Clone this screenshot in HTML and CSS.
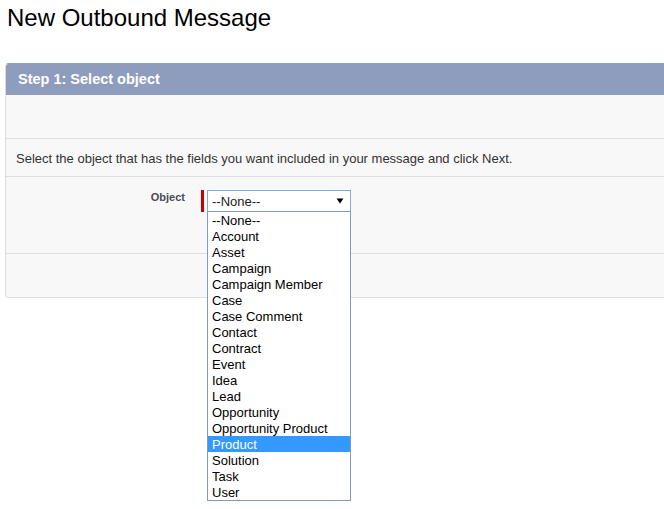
FILE: index.html
```html
<!DOCTYPE html>
<html>
    <head>
        <meta charset="utf-8">
        <title>New Outbound Message</title>
        <link rel="stylesheet" href="styles.css">
    </head>
    <body>
        <h1 class="page_title">New Outbound Message</h1>
        <div class="panel">
            <div class="panel_head">
                <h2>Step 1: Select object</h2>
            </div>
            <div class="panel_blank"></div>
            <div class="panel_desc">Select the object that has the fields you want included in your message and click Next.</div>
            <div class="panel_form">
                <div class="field_row">
                    <label class="field_label">Object</label>
                    <div class="req_bar"></div>
                    <div class="picklist">
                        <div class="pick_value">
                            <span>--None--</span>
                            <svg class="pick_arrow" width="8" height="6" viewBox="0 0 8 6"><polygon points="0.5,0.5 7.5,0.5 4,5.5" fill="#000"/></svg>
                        </div>
                        <ul class="pick_options">
                            <li>--None--</li>
                            <li>Account</li>
                            <li>Asset</li>
                            <li>Campaign</li>
                            <li>Campaign Member</li>
                            <li>Case</li>
                            <li>Case Comment</li>
                            <li>Contact</li>
                            <li>Contract</li>
                            <li>Event</li>
                            <li>Idea</li>
                            <li>Lead</li>
                            <li>Opportunity</li>
                            <li>Opportunity Product</li>
                            <li class="selected">Product</li>
                            <li>Solution</li>
                            <li>Task</li>
                            <li>User</li>
                        </ul>
                    </div>
                </div>
            </div>
            <div class="panel_foot"></div>
        </div>
    </body>
</html>
```

FILE: styles.css
```css
html, body{
    min-height: 100%;
}
body{
    margin: 0; min-height: 509px; font-family: "Liberation Sans", Arial, sans-serif; color: #222; background: #fff;
}
.page_title{
    font-size: 24px; font-weight: normal; line-height: 28px; margin: 4px 0 31px 7px; color: #000;
}

.panel{
    margin-left: 5px; background: #f8f8f8;
    border: 1px solid #dedede; border-top-color: #8e9dbe; border-right: none; border-radius: 4px 0 0 4px;
}
.panel_head{
    height: 31px; background: #8e9dbe; border-radius: 3px 0 0 0; padding-left: 12px;
}
.panel_head h2{
    margin: 0; font-size: 14.5px; line-height: 31px; font-weight: bold; color: #fff;
}
.panel_blank{
    height: 43px; border-bottom: 1px solid #dedede;
}
.panel_desc{
    height: 36px; padding-top: 1px; line-height: 37px; padding-left: 10px; font-size: 13px; color: #333;
    border-bottom: 1px solid #dedede;
}
.panel_form{
    height: 63px; padding-top: 13px; border-bottom: 1px solid #dedede;
}
.panel_foot{
    height: 43px;
}

/* form row */
.field_row{
    display: flex; align-items: flex-start;
}
.field_label{
    width: 179px; text-align: right; font-size: 11px; line-height: 14px; font-weight: bold; color: #4a4a56;
}
.req_bar{
    width: 3px; height: 22px; background: #c00; margin-left: 16px;
}
.picklist{
    position: relative; margin-left: 3px;
}
.pick_value{
    width: 142px; height: 20px; border: 1px solid #7eaddd; background: #fff;
    display: flex; align-items: center; justify-content: space-between;
    font-size: 13px;
}
.pick_value span{
    padding-left: 4px; line-height: 20px; padding-top: 1px;
}
.pick_arrow{
    margin-right: 6px;
}
.pick_options{
    position: absolute; top: 21px; left: 0; z-index: 5; width: 142px; margin: 0; padding: 0; list-style: none;
    background: #fff; border: 1px solid #7f9db9;
}
.pick_options li{
    height: 15px; padding-top: 1px; line-height: 16px; font-size: 13px; padding-left: 4px; color: #000;
}
.pick_options .selected{
    background: #3399ff; color: #fff;
}
```
